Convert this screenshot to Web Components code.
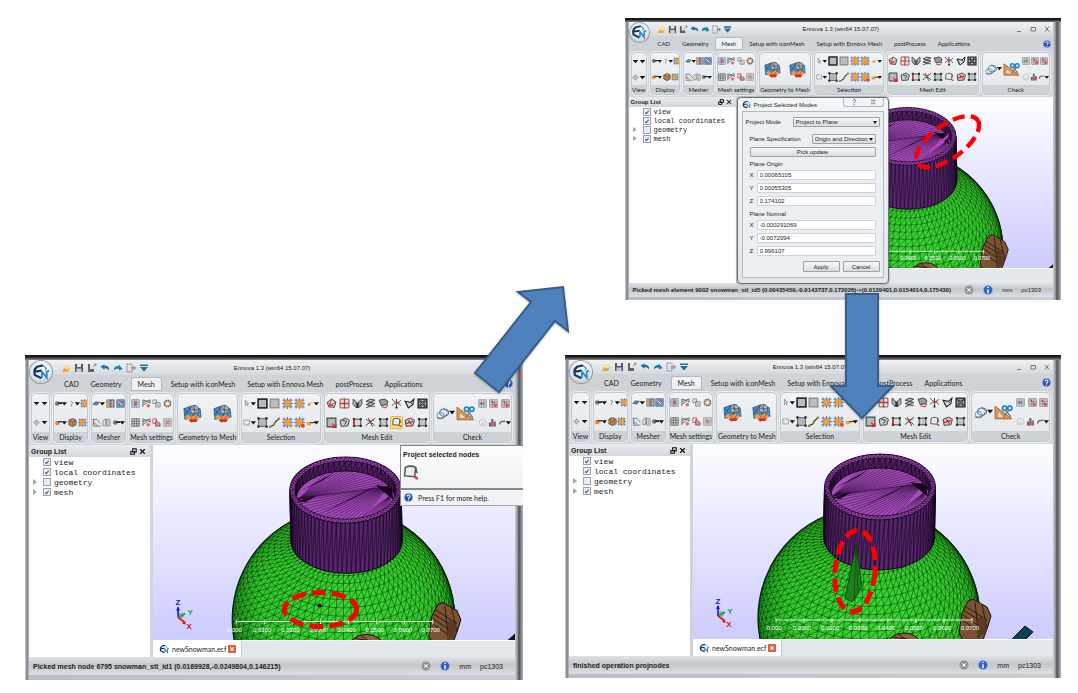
<!DOCTYPE html>
<html lang="en">
<head>
<meta charset="utf-8">
<title>Ennova node projection steps</title>
<meta name="viewport" content="width=device-width">
<style>
html,body{margin:0;background:#fff}
body{font-family:"Liberation Sans",Arial,sans-serif;color:#222}
</style>
</head>
<body>
<step-board>
  <ennova-window slot="detail" size="small" status="Picked mesh element 9002 snowman_stl_id5 (0.00435459,-0.0143737,0.172026)-&gt;(0.0129401,0.0154014,0.175430)">
    <mesh-scene slot="view" mode="pick"></mesh-scene>
    <project-dialog slot="over"></project-dialog>
  </ennova-window>
  <ennova-window slot="before" active-tool="13" doc="newSnowman.ecf" status="Picked mesh node 6795 snowman_stl_id1 (0.0169928,-0.0249804,0.146215)">
    <mesh-scene slot="view" mode="before"></mesh-scene>
    <help-tip slot="over"></help-tip>
  </ennova-window>
  <ennova-window slot="after" size="short" doc="newSnowman.ecf" status="finished operation projnodes">
    <mesh-scene slot="view" mode="after"></mesh-scene>
  </ennova-window>
</step-board>

<script>
const define = (name, html, setup) => customElements.define(name, class extends HTMLElement {
  constructor() {
    super();
    this.attachShadow({ mode: 'open' });
  }
  connectedCallback() {
    if (this.ready) return;
    this.ready = true;
    const t = document.createElement('template');
    t.innerHTML = typeof html === 'function' ? html(this) : html;
    this.shadowRoot.append(t.content.cloneNode(true));
    if (setup) setup(this);
  }
});

/* ---------- icons ---------- */
const caret = '<path d="M10.500 3.500h6.500l-3.250 4z" fill="#111"/>';
const WIDE = '1 0 16 10';
const orangeSq = '<path d="M.5 2h9M.5 8h9M2 .5v9M8 .5v9M5 0v10M0 5h10" stroke="#4f79a8" stroke-width=".9"/><rect x="2.200" y="2.200" width="5.600" height="5.600" fill="#f39a3c"/>';
const sheet = '<path d="M1 3l5-2 3.500 2-1.500 5-6 .5z" fill="#c9cccf" stroke="#444" stroke-width=".9"/>';
const grid = (a, b) => `<rect x=".8" y=".8" width="8.400" height="8.400" fill="${a}"/><path d="M.8 .8h8.400v8.400H.8zM3.600 .8v8.400M6.400 .8v8.400M.8 3.600h8.400M.8 6.400h8.400" fill="none" stroke="${b}" stroke-width=".8"/>`;
const ICONS = {
  caret: ['0 0 10 10', '<path d="M1 3h8l-4 4.500z" fill="#111"/>'],
  move: ['0 0 10 10', '<path d="M5 1l1.500 2.500L9 5 6.500 6.500 5 9 3.500 6.500 1 5l2.500-1.500z" fill="#c5c9cd" stroke="#777" stroke-width=".9"/>'],
  ballC: [WIDE, '<circle cx="5" cy="5" r="2.800" fill="#777"/><path d="M6 3.500h5v2H6z" fill="#222"/>' + caret],
  pinC: [WIDE, '<path d="M5 3c3-1 4 1 2 2.500l-1 3" fill="none" stroke="#888" stroke-width="1.200"/>' + caret],
  orbC: [WIDE, '<circle cx="5" cy="5.500" r="2.800" fill="#e8862a"/><path d="M5 3h6v2H6z" fill="#444"/>' + caret],
  bluC: [WIDE, '<path d="M2 6l3-3 5 .5-3 3.500z" fill="#5d8fc0" stroke="#345" stroke-width=".8"/>' + caret],
  osq: ['0 0 10 10', orangeSq],
  osqr: ['0 0 10 10', orangeSq + '<circle cx="8" cy="8" r="1.800" fill="#e5462f"/>'],
  cube: ['0 0 10 10', '<path d="M5 .5l4 2v5l-4 2-4-2v-5z" fill="#e7913b" stroke="#444" stroke-width=".9"/><path d="M1 2.500l4 2 4-2M5 4.500v5M3 1.500v7M7 1.500v7" fill="none" stroke="#555" stroke-width=".7"/>'],
  tblOB: ['0 0 10 10', '<rect x=".5" y=".5" width="9" height="9" fill="#3e75bd"/><rect x="1" y="1" width="3" height="8" fill="#f09a3e"/><path d="M5 3.500h4.500M5 6.500h4.500M7 1v8" stroke="#f4b36b"/>'],
  tblB: ['0 0 10 10', grid('#8fa9cb', '#50688c') + '<path d="M3 3l4 4" stroke="#fff"/>'],
  tri: ['0 0 10 10', '<path d="M2 3l5 5H2z" fill="#f3a74f"/><path d="M.5 1.500h5l4 4.500M1 9h8.500M1.500 2v6" fill="none" stroke="#4c7fb5" stroke-width="1.100"/>'],
  docs: ['0 0 10 10', '<path d="M1 3l3-2v7l-3 1zM5 1l4 1v7H5z" fill="#e5e7ea" stroke="#777" stroke-width=".8"/><path d="M6 3.500h2M6 5.500h2M6 7h2" stroke="#777" stroke-width=".7"/>'],
  setA: ['0 0 10 10', grid('#dfe5ec', '#5f7ea6') + '<path d="M4 1l3 4-3 4z" fill="#d8574b"/>'],
  setB: ['0 0 10 10', '<path d="M1 1l8 3M1 4l8-3M1 7l5-3M1 9V1M9 1v4" stroke="#555" stroke-width=".9"/><circle cx="7" cy="7.500" r="2" fill="#e46b5e"/>'],
  setC: ['0 0 10 10', '<path d="M1 1h4v4H1zM4 4h5v5H4z" fill="#e4e6e8" stroke="#7b7f84" stroke-width=".9"/><path d="M5.500 6h2M5.500 7.500h2" stroke="#7b7f84" stroke-width=".6"/>'],
  ring: ['0 0 10 10', '<circle cx="5" cy="5" r="3.400" fill="#f2f3f4" stroke="#6c6259" stroke-width="1.900" stroke-dasharray="2 .6"/><circle cx="5" cy="5" r="2.200" fill="none" stroke="#e79a4e" stroke-width=".9"/>'],
  setD: ['0 0 10 10', grid('#d7dade', '#555') ],
  setE: ['0 0 10 10', '<path d="M1 1h4v5H1z" fill="#f2f2f2" stroke="#c33" stroke-width=".9"/><path d="M4 3l5 3v3H4z" fill="#8fabcd" stroke="#c33" stroke-width=".9"/>'],
  setF: ['0 0 10 10', grid('#e6e2e0', '#8c8c8c') + '<path d="M3 5h4M5 3v4" stroke="#d77" stroke-width="1"/>'],
  curC: [WIDE, '<path d="M4 1v6.500l1.600-1.500L7.500 9M4 1l4 4.500H5.600" fill="none" stroke="#777" stroke-width=".9"/>' + caret],
  boxC: [WIDE, '<rect x="2" y="2" width="7" height="6" fill="none" stroke="#777" stroke-dasharray="1.500 .6"/>' + caret],
  sqBold: ['0 0 10 10', '<rect x="1" y="1" width="8" height="8" fill="#b9bdc1" stroke="#1c1c1c" stroke-width="1.400"/>'],
  sq: ['0 0 10 10', '<rect x="1" y="1" width="8" height="8" fill="#b9bdc1" stroke="#777" stroke-width=".9"/>'],
  sqH: ['0 0 10 10', '<rect x="1.500" y="1.500" width="7" height="7" fill="#b3b7bb" stroke="#555" stroke-width=".8"/><path d="M.3 .3h2v2h-2zM7.700 .3h2v2h-2zM.3 7.700h2v2h-2zM7.700 7.700h2v2h-2z" fill="#222"/>'],
  curve: ['0 0 10 10', '<path d="M1 9c2-2 3 0 4-3s2-2 4-4.500" fill="none" stroke="#333" stroke-width="1.100"/><path d="M0 8h2v2H0zM4 5h2v2H4zM8 .5h2v2H8z" fill="#8a8a3a"/>'],
  orgC: [WIDE, '<circle cx="5" cy="6" r="2" fill="#f39a3c"/><path d="M7 2l2 1-2 2z" fill="#f6c28a"/>' + caret],
  keyC: [WIDE, '<path d="M2 4.500h5v4H2z" fill="#f3a51d"/><path d="M6 4.500h6v1.500H6z" fill="#6b3c12"/>' + caret],
  e1: ['0 0 10 10', '<path d="M1 4l4-3 4 2.500-1.500 5-5-.5z" fill="#ddd" stroke="#333" stroke-width=".8"/><path d="M1 4l7 4M5 1l-2 7M9 3.500L2.500 8" stroke="#c33" stroke-width=".9"/>'],
  e2: ['0 0 10 10', '<path d="M1 1h8v8H1z" fill="#e6e6e6" stroke="#555" stroke-width=".8"/><path d="M5 .5v9M.5 5h9" stroke="#e02f2f" stroke-width="1.200"/>'],
  e3: ['0 0 10 10', '<path d="M1 1l3 2.500V9l-3-3zM9 1L6 3.500V9l3-3z" fill="#abb0b5" stroke="#444" stroke-width=".8"/><path d="M5 4v5" stroke="#333" stroke-width="1.400"/>'],
  e4: ['0 0 10 10', '<path d="M1 3l4-2 4 1-4 2zM1 6l4-2 4 1-4 2zM1 9l4-2 4 1" fill="#b9bcc0" stroke="#333" stroke-width=".8"/>'],
  e5: ['0 0 10 10', '<path d="M1 2l5-1 3 2-1 3-5 1z" fill="#999da1" stroke="#333" stroke-width=".8"/><path d="M3 8l4 1 2-3" stroke="#d44" fill="none"/>'],
  e6: ['0 0 10 10', '<path d="M1 1c3 4 6 4 8 1M1 7c3-4 6-3 8 0M5 1v8" fill="none" stroke="#444" stroke-width=".9"/><circle cx="5" cy="4.600" r="1.200" fill="#e33"/><path d="M4 8h2v1.500H4z" fill="#333"/>'],
  e7: ['0 0 10 10', '<path d="M1 3l5 1 3-3-1 5-4 3z" fill="#d5d8db" stroke="#222" stroke-width="1"/><path d="M1 3l3 6M6 4l2 2" stroke="#333" stroke-width=".8"/>'],
  e8: ['0 0 10 10', '<path d="M1 1h8v8H1z" fill="#aeb1b4" stroke="#222" stroke-width="1.200"/><path d="M3.500 1v8M6.500 1v8M1 3.500h8M1 6.500h8M1 1l8 8M9 1L1 9" stroke="#222" stroke-width=".6"/>'],
  f1: ['0 0 10 10', '<path d="M1 1h8v8H1z" fill="#b5b8bb" stroke="#444"/><path d="M5.500 6l3 3M9 6.500V9.500H6" stroke="#d22" stroke-width="1.200" fill="none"/>'],
  f2: ['0 0 10 10', sheet + '<path d="M3 3l4 1-2 3" fill="none" stroke="#333" stroke-width=".8"/>'],
  f3: ['0 0 10 10', '<path d="M2 2h6v6H2z" fill="#ddd" stroke="#333" stroke-width=".8"/><path d="M.8 .8h2V3h-2zM7 .8h2V3H7zM7 7h2v2H7zM.8 7h2v2h-2z" fill="#333"/><path d="M1.500 2v6" stroke="#d22"/>'],
  f4: ['0 0 10 10', '<path d="M1 2c3 3 6 2 8-1M1 8c2-4 6-3 8 0M3 1l4 8" fill="none" stroke="#444" stroke-width=".9"/><path d="M4 5l4-3" stroke="#d22"/>'],
  f5: ['0 0 10 10', '<path d="M2 2h6v6H2z" fill="#c5c8cb" stroke="#333" stroke-width=".8"/><path d="M.8 .8h2V3h-2zM7.200 .8h2V3h-2zM7.200 7h2v2h-2zM.8 7h2v2h-2z" fill="#333"/>'],
  f6: ['0 0 10 10', '<path d="M2 2c2-1 4-1 6 0L7.500 7.500 1.500 7z" fill="#ececec" stroke="#555" stroke-width=".9"/><path d="M8 2l1 3.500" stroke="#555" stroke-width=".8"/><path d="M7.500 7.500l1.800 1.300" stroke="#e33" stroke-width="1.400"/>'],
  f7: ['0 0 10 10', sheet + '<path d="M2 6l6-2M4 3l3 4" stroke="#d22" stroke-width="1.100"/>'],
  swirl: ['1 1 21 16', '<ellipse cx="6" cy="11" rx="4" ry="3" fill="#e3f0f8" stroke="#6a8798"/><ellipse cx="10" cy="8" rx="5" ry="4" fill="none" stroke="#3c85b5" stroke-width="1.200"/><path d="M2 14c5 2 10 0 11-5M9 3l6 5" fill="none" stroke="#667" stroke-width="1.100"/><path d="M15.500 6h6.500l-3.250 4z" fill="#111"/>'],
  ruler: ['0 0 18 16', '<path d="M1 2v12h16z" fill="#d99554" stroke="#9b5f29" stroke-width=".8"/><path d="M4 8v4h5z" fill="#e9ecef"/><circle cx="10" cy="4" r="2" fill="none" stroke="#1b86c9" stroke-width="1.600"/><circle cx="15" cy="4" r="2" fill="none" stroke="#1b86c9" stroke-width="1.600"/><path d="M11 6l5 6M14 6l-5 6" stroke="#777" stroke-width="1.200"/>'],
  c1: ['0 0 10 10', grid('#dfe3e8', '#7b858f') + '<path d="M2 5h5" stroke="#c44" stroke-width="1.300"/>'],
  c2: ['0 0 10 10', grid('#dfe3e8', '#8a6f78') + '<circle cx="7" cy="7" r="2" fill="#e05b4e"/><path d="M3 2l2 3" stroke="#345"/>'],
  face: ['0 0 10 10', '<circle cx="5" cy="5" r="3.800" fill="#eef0f2" stroke="#b4b8bd" stroke-width=".8"/><path d="M3.500 6.500h3M3.500 4h.6M6 4h.6" stroke="#999" stroke-width=".8"/>'],
  bars: ['0 0 10 10', '<path d="M1 5h2.500v4.500H1z" fill="#cc3d33"/><path d="M3.500 1H6v8.500H3.500z" fill="#2f7fc4"/><path d="M6 4h2.800v5.500H6z" fill="#d8493c"/>'],
  earC: [WIDE, '<path d="M3 7.500c0-4 3-4 7-4" fill="none" stroke="#667" stroke-width="1.700"/>' + caret],
  geo: ['0 0 20 20', '<path d="M1 5l8-3 3 5-2 8-8 1z" fill="#3e8ed0" stroke="#1f4f7a" stroke-width=".8"/><path d="M11 3l7 2 1 9-8 2z" fill="#5ba3da" stroke="#1f4f7a" stroke-width=".8"/><path d="M2 14l4-3 4 2 4-2 5 3-4 2H4z" fill="#f29b3a"/><circle cx="12" cy="6" r="4.500" fill="#b4b9be" stroke="#555"/><path d="M12 1.500v9M8 6h9M9 3l6 6M1 5l9 10M2 12l6-9M12 16l6-8M13 9l5 5" stroke="#34495e" stroke-width=".7"/><path d="M6 17l3-2v1h7l-2 3H9v1z" fill="#e8261d"/>'],
  open: ['0 0 10 10', '<path d="M5 1h3v5H4z" fill="#fff3c8"/><path d="M1 9l2-4h6l-2 4z" fill="#eba93a"/><path d="M4 2h4v4H4z" fill="#f9dd92"/>'],
  save: ['0 0 10 10', '<path d="M1 1h8v8H1z" fill="#55595e"/><path d="M3 1h4v3H3z" fill="#e8eaec"/><path d="M2.500 5.500h5V9h-5z" fill="#c8cbcf"/>'],
  saveAs: ['0 0 10 10', '<path d="M1 1h2v8H1zM3 6h4v3H3z" fill="#606468"/><path d="M7 1h2M6 4l3-3M9 1v2" stroke="#888"/>'],
  undo: ['0 0 10 10', '<path d="M.5 3.500l4-2v1.300c4 0 5 2 4.500 5-1-2-2-2.600-4.500-2.600v1.500z" fill="#1d6fa5"/>'],
  redo: ['0 0 10 10', '<path d="M9.500 6l-3.500 1.500V6C4 5.500 2 6 1 7.500c-.5-3.500 2-5 5-4.500V1.500z" fill="#1d7fae"/>'],
  select: ['0 0 10 10', '<path d="M1 1h5v8H1z" fill="none" stroke="#777" stroke-dasharray="1.500 1"/><path d="M5 5h4M7.500 3L9.500 5l-2 2" stroke="#777" fill="none"/>'],
  more: ['0 0 10 10', '<path d="M1 1.500h8v1.500H1zM1 4h8L5 8.500z" fill="#1d6c9c"/>'],
  cancel: ['0 0 10 10', '<circle cx="5" cy="5" r="4.500" fill="#85888c"/><circle cx="5" cy="5" r="3.400" fill="#75787c" stroke="#c9cbce" stroke-width=".6"/><path d="M3.300 3.300l3.400 3.400M6.700 3.300L3.300 6.700" stroke="#fff" stroke-width="1.200"/>'],
  info: ['0 0 10 10', '<circle cx="5" cy="5" r="4.600" fill="#3261c8" stroke="#9fb4e6" stroke-width=".7"/><path d="M5 4.200v4M5 1.800v1.300" stroke="#fff" stroke-width="1.500"/>'],
  help: ['0 0 10 10', '<circle cx="5" cy="5" r="4.500" fill="#2a51a8" stroke="#8fa6d6" stroke-width=".8"/><path d="M3.300 3.900c0-2.200 3.400-2.200 3.400-.2C6.700 5 5 5 5 6.300M5 7.200v1.200" fill="none" stroke="#fff" stroke-width="1.200"/>'],
  min: ['0 0 10 10', '<path d="M3 7.500h4" stroke="#777"/>'],
  max: ['0 0 10 10', '<path d="M3 3.500h4.500v3.500H3z" fill="none" stroke="#777"/>'],
  close: ['0 0 10 10', '<path d="M3 2.500l4 5M7 2.500l-4 5" stroke="#777"/>'],
  closeB: ['0 0 10 10', '<path d="M2.500 2.500l5 5M7.500 2.500l-5 5" stroke="#111" stroke-width="1.300"/>'],
  float: ['0 0 10 10', '<path d="M4 2h4v3.500H4zM2 5h4v3H2z" fill="#ddd" stroke="#111" stroke-width="1.200"/>'],
  closeR: ['0 0 10 10', '<rect width="10" height="10" rx="1" fill="#d9613e"/><path d="M3 3l4 4M7 3L3 7" stroke="#fff" stroke-width="1.500"/>'],
  question: ['0 0 10 10', '<path d="M3.500 3.500c0-2.400 3.500-2.400 3.500-.3C7 4.600 5.200 5 5.200 6.500M5.200 7.500v1.500" fill="none" stroke="#777" stroke-width="1.200"/>'],
  closeW: ['0 0 10 10', '<path d="M2.500 2.500h2l.7 1.500.8-1.500h2L6 5l2 2.500H6L5.200 6l-.7 1.500h-2L4.300 5z" fill="#fff" stroke="#777" stroke-width=".8"/>'],
  logo: ['0 0 20 20', '<path d="M11.500 2.500L5.500 4C3 5.500 2 9 3 12.500l7 3.500M3 9l7-1" fill="none" stroke="#123a5c" stroke-width="2.300"/><path d="M10.500 15.500V9l5 6.500V9l2.500-1" fill="none" stroke="#2d86c7" stroke-width="1.900"/><path d="M11.500 2.500l3.500 3-1.500 2" fill="none" stroke="#2d86c7" stroke-width="1.200"/>']
};
const svg = n => `<svg viewBox="${ICONS[n][0]}" aria-hidden="true">${ICONS[n][1]}</svg>`;

customElements.define('app-icon', class extends HTMLElement {
  constructor() { super(); this.attachShadow({ mode: 'open' }); }
  connectedCallback() {
    this.shadowRoot.innerHTML = `<style>:host{display:block;width:var(--icon,10px);height:var(--icon,10px)}:host([wide]){width:var(--wide,16px)}:host([big]){width:var(--big,20px);height:var(--big,20px)}svg{display:block;width:100%;height:100%}</style>${svg(this.getAttribute('name'))}`;
  }
});

/* ---------- ribbon group ---------- */
const GROUPS = [
  ['View', 19, ['caret caret', 'move caret']],
  ['Display', 35, ['ballC pinC osq', 'orbC cube osq']],
  ['Mesher', 35, ['bluC tblOB tblB', 'tri docs ballC']],
  ['Mesh settings', 45, ['setA setB setC ring', 'setD setB setE setF']],
  ['Geometry to Mesh', 61, ['geo geo']],
  ['Selection', 80, ['curC sqBold sq osq osq orgC', 'boxC sqH curve osq osqr keyC']],
  ['Mesh Edit', 106, ['e1 e2 e3 e4 e5 e6 e7 e8', 'f1 f2 f3 f4 f5 f6 f7 f5']],
  ['Check', 79, ['c1 c2 c2', 'face bars earC']]
];
define('ribbon-group', el => {
  const [label, , rows] = GROUPS[+el.getAttribute('index')];
  const active = +(el.getAttribute('active') || 0);
  let n = 0;
  const row = r => `<div class="row">${r.split(' ').map(i => {
    const on = label === 'Mesh Edit' && ++n === active + 1;
    return `<button type="button" aria-label="${label} ${i}"${on ? ' class="on"' : ''}><app-icon name="${i}"${/C$/.test(i) && i !== 'setC' ? ' wide' : ''}${i === 'geo' ? ' big' : ''}></app-icon></button>`;
  }).join('')}</div>`;
  const lead = label === 'Check' ? '<div class="lead"><button type="button" aria-label="Measure"><app-icon big name="swirl"></app-icon></button><button type="button" aria-label="Quality"><app-icon big name="ruler"></app-icon></button></div>' : '';
  return `<style>
  :host{display:flex;flex-direction:column;min-width:0;box-sizing:border-box;border:1px solid #c3c8ce;border-radius:5px;background:linear-gradient(#f1f3f5,#e2e5e9);overflow:hidden;box-shadow:0 0 0 1px #e9ecef}
  :host([index="0"]) .body{--icon:7px}
  :host([index="5"]) .body,:host([index="6"]) .body{--icon:var(--tool)}
  .body{flex:1;display:flex;min-height:0}
  .rows{flex:1;display:flex;flex-direction:column;justify-content:space-around;min-width:0}
  .row{display:flex;justify-content:space-around;align-items:center}
  .lead{display:flex;align-items:center;gap:1px;padding:0 2px}
  button{all:unset;display:block;flex:none}
  .on{background:#ffe27a;box-shadow:0 0 0 1px #e2b84a;border-radius:1px}
  .label{height:var(--label-h);font:var(--ui-font);line-height:var(--label-h);text-align:center;white-space:nowrap;background:#cdd2d8;color:#222}
  </style><div class="body">${lead}<div class="rows">${rows.map(row).join('')}</div></div><div class="label">${label}</div>`;
});

/* ---------- tree ---------- */
define('group-tree', `<style>
  :host{display:flex;flex-direction:column;background:#fff;min-width:0}
  header{display:flex;align-items:center;height:var(--head-h);padding:0 3px 0 2px;font-size:var(--stat);font-weight:bold;background:linear-gradient(#e8ebee,#d3d7dc)}
  header span{flex:1}
  ul{list-style:none;margin:0;padding:0 0 0 4px;font-family:"Liberation Mono",monospace;font-size:var(--mono)}
  li{display:flex;align-items:center;height:var(--row-h)}
  li::before{content:"";box-sizing:border-box;width:4px;height:6px;margin:0 6px 0 0}
  li.sub::before{background:#a3a7ab;clip-path:polygon(0 0,100% 50%,0 100%)}
  input{appearance:none;flex:none;box-sizing:border-box;width:8px;height:8px;margin:0 3px 0 0;border:1px solid #9aa0a6;background:#e9edf1;display:grid;place-items:center}
  input:checked::after{content:"";width:1px;height:3px;border:solid #2d4f8f;border-width:0 1px 1px 0;transform:rotate(40deg)}
  </style>
  <header><span>Group List</span><app-icon name="float"></app-icon><app-icon name="closeB"></app-icon></header>
  <ul>
    <li><input type="checkbox" id="v" checked><label for="v">view</label></li>
    <li><input type="checkbox" id="l" checked><label for="l">local coordinates</label></li>
    <li class="sub"><input type="checkbox" id="g"><label for="g">geometry</label></li>
    <li class="sub"><input type="checkbox" id="m" checked><label for="m">mesh</label></li>
  </ul>`);

/* ---------- window ---------- */
const TABS = ['CAD', 'Geometry', 'Mesh', 'Setup with iconMesh', 'Setup with Ennova Mesh', 'postProcess', 'Applications'];
define('ennova-window', el => `<style>
  :host{--ui-font:7px Lato,sans-serif;--title:6px;--stat:7px;--mono:8px;--frame:5px;--foot:5px;--title-h:15px;--tab-h:17px;--ribbon-h:53px;--label-h:10px;--head-h:12px;--row-h:10px;--strip-h:17px;--status-h:18px;--main-h:212px;--icon:9px;--tool:11px;--wide:13px;--big:19px;--logo:22px;--mark:19px;--tabpad:6px;--tabgap:4px;--lead:29px;--tree:121px;
    display:block;position:relative;box-sizing:border-box;padding:var(--frame) 8px var(--foot) 4px;background:linear-gradient(90deg,#d3d5d8,#7a7e83 2px,#b9bec4 4px,#c9cdd2 calc(100% - 8px),#a3a8ad calc(100% - 6px),#4c5056 calc(100% - 4px),#b5babf)}
  :host([size=short]){--title-h:14px;--foot:4px}
  :host([size=small]){--ui-font:6px Lato,sans-serif;--stat:6px;--mono:7px;--frame:4px;--foot:3px;--title-h:14px;--tab-h:15px;--ribbon-h:46px;--label-h:9px;--head-h:10px;--row-h:9px;--strip-h:15px;--status-h:14px;--main-h:186px;--icon:8px;--tool:10px;--wide:11px;--big:17px;--logo:19px;--mark:17px;--tabpad:6px;--tabgap:1px;--lead:23px;--tree:107px}
  :host::before{content:"";position:absolute;inset:0 0 auto 0;height:var(--frame);background:linear-gradient(#111,#222 2px,#8b8f93)}
  .title{height:var(--title-h);display:grid;grid-template-columns:minmax(0,1fr) auto minmax(0,1fr);align-items:center;background:linear-gradient(#f0f2f4,#d5d9dd);font-size:var(--title)}
  .quick{display:flex;gap:3px;padding-left:32px;--icon:var(--q,10px)}
  :host([size=small]) .quick{--q:9px;gap:2px;padding-left:28px}
  h1{font:inherit;margin:0;white-space:nowrap}
  .ctl{display:flex;gap:4px;justify-content:flex-end;padding-right:1px;--icon:10px}
  nav{height:var(--tab-h);display:flex;align-items:center;padding-left:var(--lead);background:#cfd3d8;font:var(--ui-font);white-space:nowrap}
  nav a{color:#222;text-decoration:none;padding:2px var(--tabpad)}
  nav a[aria-current]{background:#eef0f3;box-shadow:0 0 0 1px #b4b9bf;padding:2px 6px;margin:0 var(--tabgap);border-radius:2px 2px 0 0}
  nav app-icon{margin-left:auto;margin-right:2px}
  .logo{position:absolute;left:5px;top:calc(var(--frame) + 1px);width:var(--logo);height:var(--logo);border-radius:50%;background:radial-gradient(circle at 50% 30%,#fff,#dfe4e9 60%,#aab2ba);box-shadow:0 0 0 1px #8e969e;display:grid;place-items:center;--icon:var(--mark)}
  .ribbon{box-sizing:border-box;height:var(--ribbon-h);padding:1px 3px 2px 2px;display:grid;grid-template-columns:${GROUPS.map(g => `minmax(0,${g[1]}fr)`).join(' ')};gap:3px;background:#d3d7dc}
  .main{display:grid;grid-template-columns:var(--tree) minmax(0,1fr);gap:3px;min-height:var(--main-h);background:#d0d4d9}
  .doc{display:flex;flex-direction:column;min-width:0;background:#e4e7eb}
  .view{flex:1;min-height:0;display:flex;position:relative;border-bottom:1px solid #fff;background:linear-gradient(#fdfdff,#ccccff)}
  .strip{height:calc(var(--strip-h) - 1px);display:flex}
  .tab{display:flex;align-items:center;gap:2px;padding:0 5px 0 6px;background:#fff;border-right:1px solid #c3c8cd;font:7px Lato,sans-serif;color:#222;--icon:11px}
  .status{height:var(--status-h);display:flex;align-items:center;font-size:var(--stat);background:linear-gradient(#dfe2e5,#c3c7cc 45%,#dde0e3);padding:0 12px 0 4px;gap:9px;white-space:nowrap;--icon:10px}
  .status b{flex:1}
  </style>
  <div class="title"><div class="quick">${['open', 'save', 'saveAs', 'undo', 'redo', 'select', 'more'].map(i => `<app-icon name="${i}"></app-icon>`).join('')}</div><h1>Ennova 1.3 (win64 15.07.07)</h1><div class="ctl"><app-icon name="min"></app-icon><app-icon name="max"></app-icon><app-icon name="close"></app-icon></div></div>
  <nav>${TABS.map(t => `<a href="#"${t === 'Mesh' ? ' aria-current="page"' : ''}>${t}</a>`).join('')}<app-icon name="help"></app-icon></nav>
  <div class="logo"><app-icon name="logo"></app-icon></div>
  <div class="ribbon">${GROUPS.map((g, i) => `<ribbon-group index="${i}" active="${el.getAttribute('active-tool') || -1}"></ribbon-group>`).join('')}</div>
  <div class="main"><group-tree></group-tree><div class="doc"><div class="view"><slot name="view"></slot></div><div class="strip">${el.hasAttribute('doc') ? `<div class="tab"><app-icon name="logo"></app-icon><span>${el.getAttribute('doc')}</span><app-icon name="closeR" style="--icon:8px"></app-icon></div>` : ''}</div></div></div>
  <div class="status"><b></b><app-icon name="cancel"></app-icon><app-icon name="info"></app-icon><span>mm</span><span>pc1303</span></div>
  <slot name="over"></slot>`, el => {
  el.shadowRoot.querySelector('.status b').textContent = el.getAttribute('status');
});

/* ---------- 3D scene ---------- */
const r1 = n => Math.round(n * 10) / 10;
function ball(cx, cy, R) {
  const nl = 42, nm = 70;
  const at = (i, j) => {
    const t = Math.PI * i / nl, p = 2 * Math.PI * j / nm;
    const x = Math.sin(t) * Math.sin(p), y = Math.sin(t) * Math.cos(p), z = Math.cos(t);
    return [r1(cx + R * x), r1(cy - R * (z * .8 - y * .6)), y * .8 + z * .6];
  };
  let d = '';
  for (let i = 5; i < nl; i++) for (let j = 0; j < nm; j++) {
    const a = at(i, j), b = at(i, j + 1), c = at(i + 1, j);
    if (a[2] < 0 || a[1] > 200) continue;
    d += `M${b[0]} ${b[1]}L${a[0]} ${a[1]}L${c[0]} ${c[1]}L${b[0]} ${b[1]}`;
  }
  return `<circle cx="${cx}" cy="${cy}" r="${R}" fill="url(#ball)" stroke="#0a2a0a" stroke-width="1.200"/><path d="${d}" fill="none" stroke="#062806" stroke-width=".5"/>`;
}
function hat(cx, cy, bx) {
  const rx = 55.5, ry = 33, ix = 50.5, iy = 29, h = 50;
  const P = (a, x, y, dx = 0, dy = 0) => [r1(cx + dx + x * Math.cos(a)), r1(cy + dy + y * Math.sin(a))];
  let side = '', ring = '', wall = '', fan = '';
  const n = 38;
  for (let i = 0; i <= n; i++) {
    const a = Math.PI * i / n, b = Math.PI * (i + 1) / n;
    const t = P(a, rx, ry), u = P(a, rx, ry, bx, h), v = P(Math.min(b, Math.PI), rx, ry, bx, h);
    side += `M${t}L${u}M${t}L${v}`;
  }
  for (let i = 0; i < 80; i++) {
    const a = 2 * Math.PI * i / 80, b = 2 * Math.PI * (i + .5) / 80, c = 2 * Math.PI * (i + 1) / 80;
    ring += `M${P(a, rx, ry)}L${P(b, ix, iy)}L${P(c, rx, ry)}`;
  }
  for (let i = 0; i < 28; i++) {
    const a = Math.PI + Math.PI * i / 28, b = a + Math.PI / 28;
    wall += `M${P(a, ix, iy)}L${P(a, ix, iy, 0, 12)}L${P(b, ix, iy)}`;
  }
  const R = [cx + 44, cy - 4], L = [cx - 47, cy + 9];
  for (let i = 0; i < 17; i++) fan += `M${R}L${P(1.25 + i * .1, ix, iy)}`;
  for (let i = 0; i < 16; i++) fan += `M${L}L${P(-.5 - i * .1, ix, iy, 0, 10)}`;
  for (let i = 0; i < 10; i++) fan += `M${cx + 44} ${cy + 6}L${P(.45 + i * .09, ix, iy)}`;
  return `<path d="M${cx - rx} ${cy}L${cx - rx + bx} ${cy + h}A${rx} ${ry} 0 0 0 ${cx + rx + bx} ${cy + h}L${cx + rx} ${cy}z" fill="#56266b" stroke="#140619"/>
  <path d="${side}" stroke="#12051a" stroke-width=".6"/>
  <ellipse cx="${cx}" cy="${cy}" rx="${rx}" ry="${ry}" fill="#a04bb5" stroke="#1c0824" stroke-width="1"/>
  <path d="${ring}" fill="none" stroke="#230a2c" stroke-width=".7"/>
  <clipPath id="in"><ellipse cx="${cx}" cy="${cy}" rx="${ix}" ry="${iy}"/></clipPath>
  <g clip-path="url(#in)"><rect x="${cx - 60}" y="${cy - 40}" width="120" height="80" fill="#4f2060"/>
  <path d="${wall}" fill="none" stroke="#150519" stroke-width=".7"/>
  <ellipse cx="${cx}" cy="${cy + 10}" rx="${ix - 1}" ry="${iy}" fill="#a24bb8" stroke="#1c0824"/>
  <path d="${fan}" stroke="#2c0c38" stroke-width=".5"/>
  <path d="M${cx - 45} ${cy + 1}L${cx - 12} ${cy - 17}L${cx - 22} ${cy - 10}zM${cx + 48} ${cy + 10}L${cx + 30} ${cy - 5}L${cx + 46} ${cy - 2}zM${cx - 26} ${cy + 24}L${cx + 40} ${cy - 9}L${cx + 10} ${cy + 7}zM${cx - 49} ${cy + 11}L${cx - 28} ${cy + 5}L${cx - 40} ${cy + 12}z" fill="#16051b"/></g>
  <ellipse cx="${cx}" cy="${cy}" rx="${ix}" ry="${iy}" fill="none" stroke="#1c0824" stroke-width=".8"/>`;
}
const nose = (x, y) => `<g transform="translate(${x} ${y})"><path d="M-23 -7l6-12 5-2 14 8 4 9-3 10-5 14h-20l-4-7z" fill="#7a5234" stroke="#1f120a"/><path d="M-20 -14L2 0M-22 -10L2 5M-22 -5L0 10M-23 0L-2 14M-10 -18L-6 18M-3 -15L2 8" stroke="#24150c" stroke-width=".9"/><path d="M-6 -4l8 6-2 12-8 4z" fill="#5a3a22"/></g>`;
define('mesh-scene', el => {
  const mode = el.getAttribute('mode');
  const after = mode === 'after', pick = mode === 'pick';
  const sx = after ? 176 : 190, hx = after ? 187 : 192, hy = after ? 43 : 45;
  const x0 = 83, ly = 176;
  const labels = ['0.000', '0.0100', '0.0200', '0.0300', '0.0400', '0.0500', '0.0600', '0.0700'];
  const skip = pick ? 4 : 0;
  const axis = `<path d="M${x0} ${ly}h196${labels.map((_, i) => `M${x0 + i * 28} ${ly - 2}v5`).join('')}" stroke="#e8f5e8" stroke-width=".9" fill="none"/>` +
    labels.map((t, i) => i < skip ? '' : `<text x="${x0 - 2 + i * 28}" y="${ly + 10}">${t}</text>`).join('');
  const marks = {
    before: '<ellipse cx="167" cy="164" rx="36" ry="17" stroke-dasharray="14 6"/>',
    after: '<ellipse cx="162" cy="127" rx="20" ry="41" transform="rotate(5 162 127)" stroke-dasharray="13 6"/>',
    pick: '<ellipse cx="238" cy="51" rx="42" ry="19" transform="rotate(-36 238 51)" stroke-dasharray="14 7"/>'
  };
  return `<style>:host{display:block;position:absolute;inset:0}svg{display:block;width:100%;height:100%}text{font:6px "Liberation Sans",sans-serif;fill:#fff;text-anchor:middle}</style>
  <svg viewBox="0 0 361 195" preserveAspectRatio="xMinYMin slice" role="img" aria-label="Snowman mesh">
  <defs><radialGradient id="ball" cx=".55" cy=".4" r=".6"><stop offset="0" stop-color="#38d830"/><stop offset=".7" stop-color="#32c92b"/><stop offset="1" stop-color="#1b8a1d"/></radialGradient></defs>
  ${ball(sx, 174, 111)}${hat(hx, hy, after ? -1 : 1)}
  <ellipse cx="${after ? 211 : 213}" cy="202" rx="17" ry="13" fill="#8a6040" stroke="#1f120a"/><path d="M${after ? 197 : 199} 196l28 3M${after ? 200 : 202} 193l20 3M${after ? 205 : 207} 190l12 8" stroke="#24150c" stroke-width=".9"/>
  ${nose(after ? 292 : 301, after ? 176 : 178)}
  ${after ? '<path d="M318 196l14-14 8 6-9 9z" fill="#0f4250" stroke="#06181d"/>' : '<path d="M352 196l9-8v8z" fill="#0b1c20"/>'}
  ${after ? '<path d="M163 101l6 42-10 15-7-4z" fill="#1e7f1d" stroke="#0b3a0b" stroke-width=".8"/><path d="M163 101l-2 56M163 101l2 48" stroke="#0b3a0b" stroke-width=".6"/>' : ''}
  ${mode === 'before' ? '<circle cx="166" cy="160" r="2" fill="#021002"/>' : ''}
  ${pick ? '<path d="M206 70l34-29-2 6z" fill="#d22fd6"/>' : ''}
  ${axis}
  ${pick ? '' : '<g stroke-width="1.600" fill="none"><circle cx="28" cy="170" r="3" fill="#aaa" stroke="none"/><path d="M25 172v-10" stroke="#1414e0"/><path d="M23 165l2-4 2 4z" fill="#1414e0" stroke="none"/><path d="M25 172l7-4" stroke="#12a52a"/><path d="M25 172l7 5" stroke="#e01414"/><path d="M33 179l-4-1 2-3z" fill="#e01414" stroke="none"/></g><text x="25" y="160" style="fill:#1414e0;font-weight:bold;font-size:8px">Z</text><text x="37" y="170" style="fill:#12a52a;font-weight:bold;font-size:8px">Y</text><text x="36" y="183" style="fill:#e01414;font-weight:bold;font-size:8px">X</text>'}
  <g fill="none" stroke="#fb0000" stroke-width="5">${marks[mode]}</g>
  </svg>`;
});

/* ---------- overlays ---------- */
define('help-tip', `<style>
  :host{position:absolute;top:90px;right:0;width:123px;box-sizing:border-box;background:linear-gradient(#fdfdfd,#eceef1);border-top:1px solid #888;border-left:1px solid #888;border-bottom:1px solid #aaa;font-size:7px}
  b{display:block;padding:4px 2px 5px;line-height:9px}
  .pic{padding:0 1px 7px;--icon:17px}
  p{margin:0;border-top:2px solid #84878a;display:flex;align-items:center;gap:5px;height:15px;padding:0 3px;background:#f1f3f5;font-family:Lato,sans-serif}
  </style><b>Project selected nodes</b><div class="pic"><app-icon name="f6"></app-icon></div><p><app-icon name="help"></app-icon>Press F1 for more help.</p>`);

define('project-dialog', () => {
  const vec = (n, v) => ['X', 'Y', 'Z'].map((a, i) => `<div class="f"><label for="${n}${a}">${a}</label><input id="${n}${a}" value="${v[i]}"></div>`).join('');
  return `<style>
  :host{position:absolute;left:112px;top:79px;width:152px;height:187px;box-sizing:border-box;border:1px solid #6d7277;border-radius:4px;background:linear-gradient(#f4f5f6,#e2e6ea);box-shadow:0 0 2px #0008;padding:0 4px 5px;font-size:6px;line-height:8px;display:flex;flex-direction:column;--icon:10px}
  header{display:flex;align-items:center;height:13px;gap:2px}
  h2{font:inherit;margin:0;flex:1}
  .cap{display:flex;align-self:flex-start;border:1px solid #b3b7bb;border-top:0;background:#f3f4f5;gap:11px;padding:0 6px;--icon:8px;border-radius:0 0 3px 3px}
  form{flex:1;background:#ebeef2;border:1px solid #b4b9be;padding:4px 3px;display:flex;flex-direction:column;margin:0}
  .m{display:flex;align-items:center;justify-content:space-between;height:12px;margin-bottom:6px}
  section{padding:0 4px;display:flex;flex-direction:column}
  section .m{height:10px;margin-bottom:3px}
  select,input,button{appearance:none;box-sizing:border-box;font:inherit;color:#222;margin:0;border:1px solid #9da2a8;border-radius:1px;height:10px;line-height:8px;padding:0 2px}
  select,button{background:linear-gradient(#f6f7f8,#d9dde1)}
  .s{position:relative}.s select{width:100%;display:block}
  .s::after{content:"";position:absolute;right:3px;top:4px;border:2px solid transparent;border-top:3px solid #111;border-bottom:0}
  .s1{width:87px}.s2{width:64px}
  h3{font:inherit;margin:3px 0 1px}
  .f{display:flex;align-items:center;height:12px;gap:2px}
  .f + .f{margin-top:1px}
  .f label{width:5px}
  .f input{flex:1;min-width:0;background:#fff;border-color:#cfd3d7}
  .b{display:flex;justify-content:flex-end;gap:3px;margin-top:auto;padding-bottom:1px}
  .b button{width:37px;height:11px}
  </style>
  <header><app-icon name="logo"></app-icon><h2>Project Selected Modes</h2><div class="cap"><app-icon name="question"></app-icon><app-icon name="closeW"></app-icon></div></header>
  <form><div class="m"><label for="pm">Project Mode</label><div class="s s1"><select id="pm"><option>Project to Plane</option></select></div></div>
  <section><div class="m"><label for="ps">Plane Specification</label><div class="s s2"><select id="ps"><option>Origin and Direction</option></select></div></div>
  <button type="button">Pick update</button>
  <h3>Plane Origin</h3>${vec('o', ['0.00065105', '0.00055305', '0.174102'])}
  <h3>Plane Normal</h3>${vec('n', ['-0.000291069', '-0.0072094', '0.996107'])}</section>
  <div class="b"><button type="button">Apply</button><button type="button">Cancel</button></div></form>`;
});

/* ---------- page ---------- */
define('step-board', `<style>
  :host{display:grid;position:relative;grid-template-columns:minmax(0,498fr) minmax(0,496fr);column-gap:42px;row-gap:55px;padding:18px 17px 13px 25px;align-items:start}
  .d{grid-column:2;width:88%;justify-self:end}
  .first{grid-column:1}
  .a{position:absolute;display:block;filter:drop-shadow(0 1px 1px #0004)}
  .one{left:44%;top:284px;width:98px;height:112px}
  .two{left:77%;top:292px;width:66px;height:128px}
  polygon{fill:#4f81bd;stroke:#385d8a;stroke-width:2}
  </style>
  <div class="d"><slot name="detail"></slot></div>
  <div class="first"><slot name="before"></slot></div>
  <div><slot name="after"></slot></div>
  <svg class="a one" viewBox="473 284 98 112" aria-hidden="true"><polygon points="474,373 530,302 517,292 562,287 567,331 554,321 498,392"/></svg>
  <svg class="a two" viewBox="830 292 66 128" aria-hidden="true"><polygon points="846,294 878,294 878,386 893,386 862,418 831,386 846,386"/></svg>`);
</script>
</body>
</html>
